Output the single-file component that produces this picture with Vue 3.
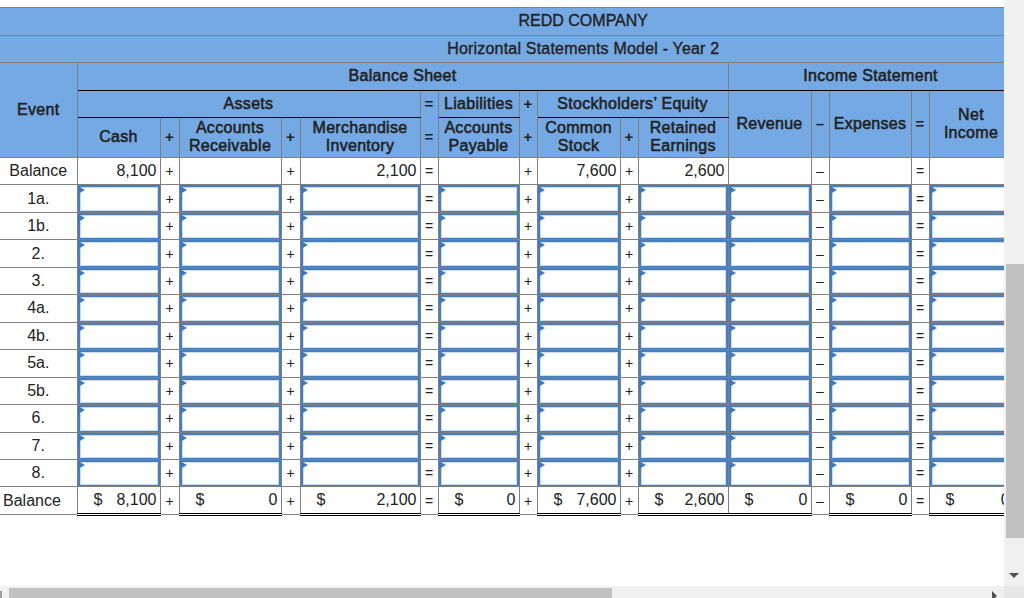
<script setup>
const events = ['1a.', '1b.', '2.', '3.', '4a.', '4b.', '5a.', '5b.', '6.', '7.', '8.']
const widths = [77, 83, 19, 102, 19, 120, 18, 81, 18, 83, 18, 90, 83, 18, 82, 18, 84]
const openRow = [
  ['8,100', '+'], ['', '+'], ['2,100', '='], ['', '+'], ['7,600', '+'], ['2,600', ''],
  ['', '–'], ['', '='], ['', '']
]
const closeRow = [
  ['8,100', '+'], ['0', '+'], ['2,100', '='], ['0', '+'], ['7,600', '+'], ['2,600', ''],
  ['0', '–'], ['0', '='], ['0', '']
]
</script>

<template>
  <div class="page">
    <div class="viewport">
      <table class="sheet">
        <colgroup>
          <col v-for="(w, i) in widths" :key="i" :style="{ width: w + 'px' }" />
        </colgroup>
        <thead>
          <tr class="r1">
            <th colspan="17" class="title">REDD COMPANY</th>
          </tr>
          <tr class="r2">
            <th colspan="17" class="title wide">Horizontal Statements Model - Year 2</th>
          </tr>
          <tr class="r3">
            <th rowspan="3" class="event">Event</th>
            <th colspan="11" class="bot-black">Balance Sheet</th>
            <th colspan="5" class="bot-black">Income Statement</th>
          </tr>
          <tr class="r4">
            <th colspan="5" class="bot-black">Assets</th>
            <th class="sym no-bot">=</th>
            <th class="bot-black">Liabilities</th>
            <th class="sym no-bot">+</th>
            <th colspan="3" class="bot-black">Stockholders’ Equity</th>
            <th rowspan="2" class="lift">Revenue</th>
            <th rowspan="2" class="sym lift">–</th>
            <th rowspan="2" class="lift">Expenses</th>
            <th rowspan="2" class="sym lift">=</th>
            <th rowspan="2" class="lift">Net<br />Income</th>
          </tr>
          <tr class="r5">
            <th>Cash</th>
            <th class="sym">+</th>
            <th>Accounts<br />Receivable</th>
            <th class="sym">+</th>
            <th>Merchandise<br />Inventory</th>
            <th class="sym">=</th>
            <th>Accounts<br />Payable</th>
            <th class="sym">+</th>
            <th>Common<br />Stock</th>
            <th class="sym">+</th>
            <th>Retained<br />Earnings</th>
          </tr>
        </thead>
        <tbody>
          <tr>
            <td class="label">Balance</td>
            <template v-for="(c, i) in openRow" :key="i">
              <td class="num">{{ c[0] }}</td>
              <td v-if="c[1]" class="op">{{ c[1] }}</td>
            </template>
          </tr>
          <tr v-for="e in events" :key="e">
            <td class="label">{{ e }}</td>
            <template v-for="(c, i) in openRow" :key="i">
              <td class="slot"><div class="field"></div></td>
              <td v-if="c[1]" class="op">{{ c[1] }}</td>
            </template>
          </tr>
          <tr class="total">
            <td class="label left">Balance</td>
            <template v-for="(c, i) in closeRow" :key="i">
              <td class="sum"><span class="dollar">$</span><span>{{ c[0] }}</span></td>
              <td v-if="c[1]" class="op">{{ c[1] }}</td>
            </template>
          </tr>
        </tbody>
      </table>
    </div>
    <div class="vbar">
      <div class="vthumb"></div>
      <div class="arrow-down"></div>
    </div>
    <div class="hbar">
      <div class="arrow-left"></div>
      <div class="hthumb"></div>
      <div class="arrow-right"></div>
    </div>
    <div class="corner"></div>
  </div>
</template>

<style>
html, body { margin: 0; background: #fff; overflow: hidden; }
</style>

<style scoped>
.page {
  position: relative;
  width: 1027px;
  height: 598px;
  overflow: hidden;
  font-family: "Liberation Sans", Arial, sans-serif;
  color: #222;
}
.viewport {
  width: 1004px;
  height: 586px;
  overflow: hidden;
  padding-top: 7px;
  box-sizing: border-box;
}
.sheet {
  table-layout: fixed;
  width: 1013px;
  border-collapse: collapse;
  font-size: 16px;
  line-height: 18px;
}
th, td {
  border: 1px solid #7f7f7f;
  padding: 0;
  box-sizing: border-box;
}
th {
  background: #75a9e4;
  font-weight: 400;
  text-align: center;
  font-size: 16px;
  -webkit-text-stroke: 0.55px #222;
  letter-spacing: 0.3px;
}
.r1 { height: 28px; }
.r2 { height: 27px; }
.r3 { height: 28px; }
.r4 { height: 27px; }
.r5 { height: 40px; }
.title { border-left: 0; padding-left: 154px; -webkit-text-stroke: 0.35px #222; letter-spacing: 0; }
.title.wide { letter-spacing: 0.2px; }
.r1 th { padding-bottom: 2px; }
.r3 th { padding-bottom: 1px; }
.r5 th { padding-bottom: 1px; }
.event { border-left: 0; }
.bot-black { border-bottom-color: #000; }
.no-bot { border-bottom-color: transparent; }
.sym { font-size: 15px; font-weight: 700; -webkit-text-stroke: 0; letter-spacing: 0; }
tbody tr { height: 27.46px; }
tbody td { background: #fff; }
.label { text-align: center; border-left: 0; }
.label.left { text-align: left; padding-left: 3px; }
.num { text-align: right; padding-right: 3px; }
.op { text-align: center; font-size: 14px; }
.slot { vertical-align: top; height: 27.46px; }
.field {
  height: 26.46px;
  box-sizing: border-box;
  border: 2px solid #4a7ebb;
  border-bottom-width: 1px;
  background: #fff;
  box-shadow: inset 0 0 0 1px #c9dcf3;
  position: relative;
}
.field::before {
  content: "";
  position: absolute;
  left: -2px;
  top: -1px;
  border-left: 7px solid #3e78c0;
  border-top: 4.5px solid transparent;
  border-bottom: 4.5px solid transparent;
}
.sum {
  position: relative;
  text-align: right;
  border-bottom: 3px double #000;
  border-top-color: #000;
  padding: 0 3px 0 14px;
}
.sum span { display: inline-block; }
.dollar { position: absolute; left: 16px; }
.vbar {
  position: absolute;
  left: 1004px;
  top: 0;
  width: 20px;
  height: 598px;
  background: #f0f0f0;
}
.vthumb {
  position: absolute;
  left: 2px;
  right: 0;
  top: 264px;
  height: 274px;
  background: #c1c1c1;
}
.arrow-down {
  position: absolute;
  left: 5px;
  top: 573px;
  border-top: 5px solid #505050;
  border-left: 5px solid transparent;
  border-right: 5px solid transparent;
}
.hbar {
  position: absolute;
  left: 0;
  top: 586px;
  width: 1004px;
  height: 12px;
  background: #f0f0f0;
}
.arrow-left {
  position: absolute;
  left: 0;
  top: 5px;
  width: 2px;
  height: 7px;
  background: #a0a0a0;
}
.hthumb {
  position: absolute;
  left: 9px;
  top: 2px;
  width: 603px;
  height: 10px;
  background: #c1c1c1;
}
.arrow-right {
  position: absolute;
  left: 992px;
  top: 5px;
  border-left: 5px solid #505050;
  border-top: 5px solid transparent;
  border-bottom: 5px solid transparent;
}
.corner {
  position: absolute;
  left: 1004px;
  top: 586px;
  width: 20px;
  height: 12px;
  background: #e6e6e6;
}
</style>
